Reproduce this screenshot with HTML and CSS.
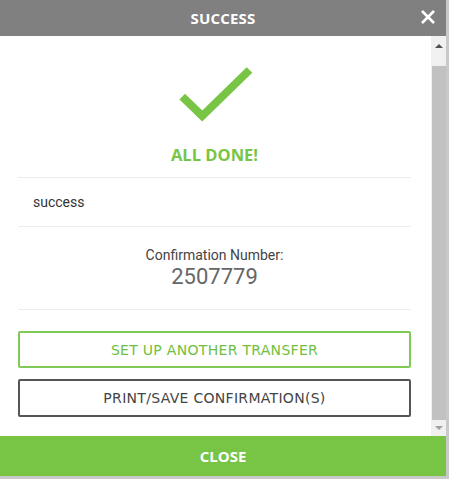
FILE: index.html
```html
<!DOCTYPE html>
<html lang="en">

<head>
    <meta charset="UTF-8">
    <meta name="viewport" content="width=device-width, initial-scale=1.0">
    <title>Success</title>

    <link rel="stylesheet" href="styles.css">
</head>

<body>
    <div class="modal">
        <header class="modal-head">
            <h2>SUCCESS</h2>
            <button class="close-x" aria-label="Close">
                <svg width="16" height="16" viewBox="0 0 16 16">
                    <path d="M2 2 L14 14 M14 2 L2 14" stroke="#fff" stroke-width="2.6" fill="none" />
                </svg>
            </button>
        </header>

        <div class="modal-body">
            <div class="content">
                <svg class="check" width="80" height="60" viewBox="0 0 80 60">
                    <polyline points="7.2,32.7 27.2,52 74.5,6" fill="none" stroke="#78c545" stroke-width="8" />
                </svg>
                <p class="done">ALL DONE!</p>

                <div class="msg-row">success</div>

                <div class="confirm">
                    <p class="confirm-label">Confirmation Number:</p>
                    <p class="confirm-num">2507779</p>
                </div>

                <div class="actions">
                    <button class="btn btn-green">SET UP ANOTHER TRANSFER</button>
                    <button class="btn btn-dark">PRINT/SAVE CONFIRMATION(S)</button>
                </div>
            </div>

            <!-- fake scrollbar -->
            <div class="scrollbar">
                <span class="arrow up"></span>
                <div class="thumb"></div>
                <span class="arrow down"></span>
            </div>
        </div>

        <button class="modal-foot">CLOSE</button>
    </div>
</body>

</html>
```

FILE: styles.css
```css
body {
    margin: 0;
    background: #c9c9c9;
    font-family: Roboto, "Liberation Sans", sans-serif;
}

.modal {
    width: 446px;
    height: 476px;
    display: flex;
    flex-direction: column;
    background: #fff;
}

/* Header */

.modal-head {
    height: 36px;
    flex: none;
    background: #808080;
    display: flex;
    align-items: center;
    justify-content: center;
    position: relative;
}

.modal-head h2 {
    margin: 0;
    color: #fff;
    font-family: "Open Sans", sans-serif;
    font-weight: 700;
    font-size: 15px;
    letter-spacing: 0.2px;
}

.close-x {
    position: absolute;
    right: 10px;
    top: 9px;
    padding: 0;
    border: 0;
    background: none;
    width: 16px;
    height: 16px;
}

.close-x svg {
    display: block;
}

/* Body */

.modal-body {
    flex: 1;
    display: flex;
    min-height: 0;
}

.content {
    flex: 1;
    padding: 0 20px 0 18px;
    display: flex;
    flex-direction: column;
}

.check {
    display: block;
    margin: 28px auto 0;
}

.done {
    margin: 21px 0 0;
    line-height: 20px;
    text-align: center;
    color: #78c545;
    font-family: "Open Sans", sans-serif;
    font-weight: 700;
    font-size: 16.5px;
    padding-bottom: 12px;
    border-bottom: 1px solid #ececec;
}

.msg-row {
    height: 48px;
    line-height: 48px;
    padding-left: 15px;
    font-size: 14px;
    color: #333;
    border-bottom: 1px solid #ececec;
}

.confirm {
    padding: 19px 0 19px;
    text-align: center;
    border-bottom: 1px solid #ececec;
}

.confirm p {
    margin: 0;
}

.confirm-label {
    line-height: 18px;
    font-size: 14px;
    color: #444;
}

.confirm-num {
    line-height: 26px;
    font-size: 22px;
    color: #666;
}

.actions {
    margin-top: 21px;
    display: flex;
    flex-direction: column;
    gap: 11px;
}

.btn {
    height: 38px;
    box-sizing: border-box;
    background: #fff;
    border-radius: 2px;
    font-family: "DejaVu Sans", sans-serif;
    font-weight: 400;
    font-size: 14px;
    letter-spacing: 0.3px;
    cursor: pointer;
}

.btn-green {
    height: 37px;
    border: 2px solid #80cb58;
    color: #6fc040;
}

.btn-dark {
    border: 2px solid #555;
    color: #444;
}

/* Scrollbar */

.scrollbar {
    width: 15px;
    flex: none;
    background: #f0f0f0;
    display: flex;
    flex-direction: column;
    align-items: center;
}

.arrow {
    width: 0;
    height: 0;
    border-left: 4px solid transparent;
    border-right: 4px solid transparent;
}

.arrow.up {
    margin-top: 8px;
    border-bottom: 4px solid #505050;
}

.arrow.down {
    margin-bottom: 6px;
    border-top: 4px solid #a0a0a0;
}

.thumb {
    width: 14px;
    flex: 1;
    margin: 18px 0 6px;
    background: #c1c1c1;
}

/* Footer */

.modal-foot {
    height: 40px;
    flex: none;
    border: 0;
    background: #78c545;
    color: #fff;
    font-family: "Open Sans", sans-serif;
    font-weight: 700;
    font-size: 15px;
}
```
